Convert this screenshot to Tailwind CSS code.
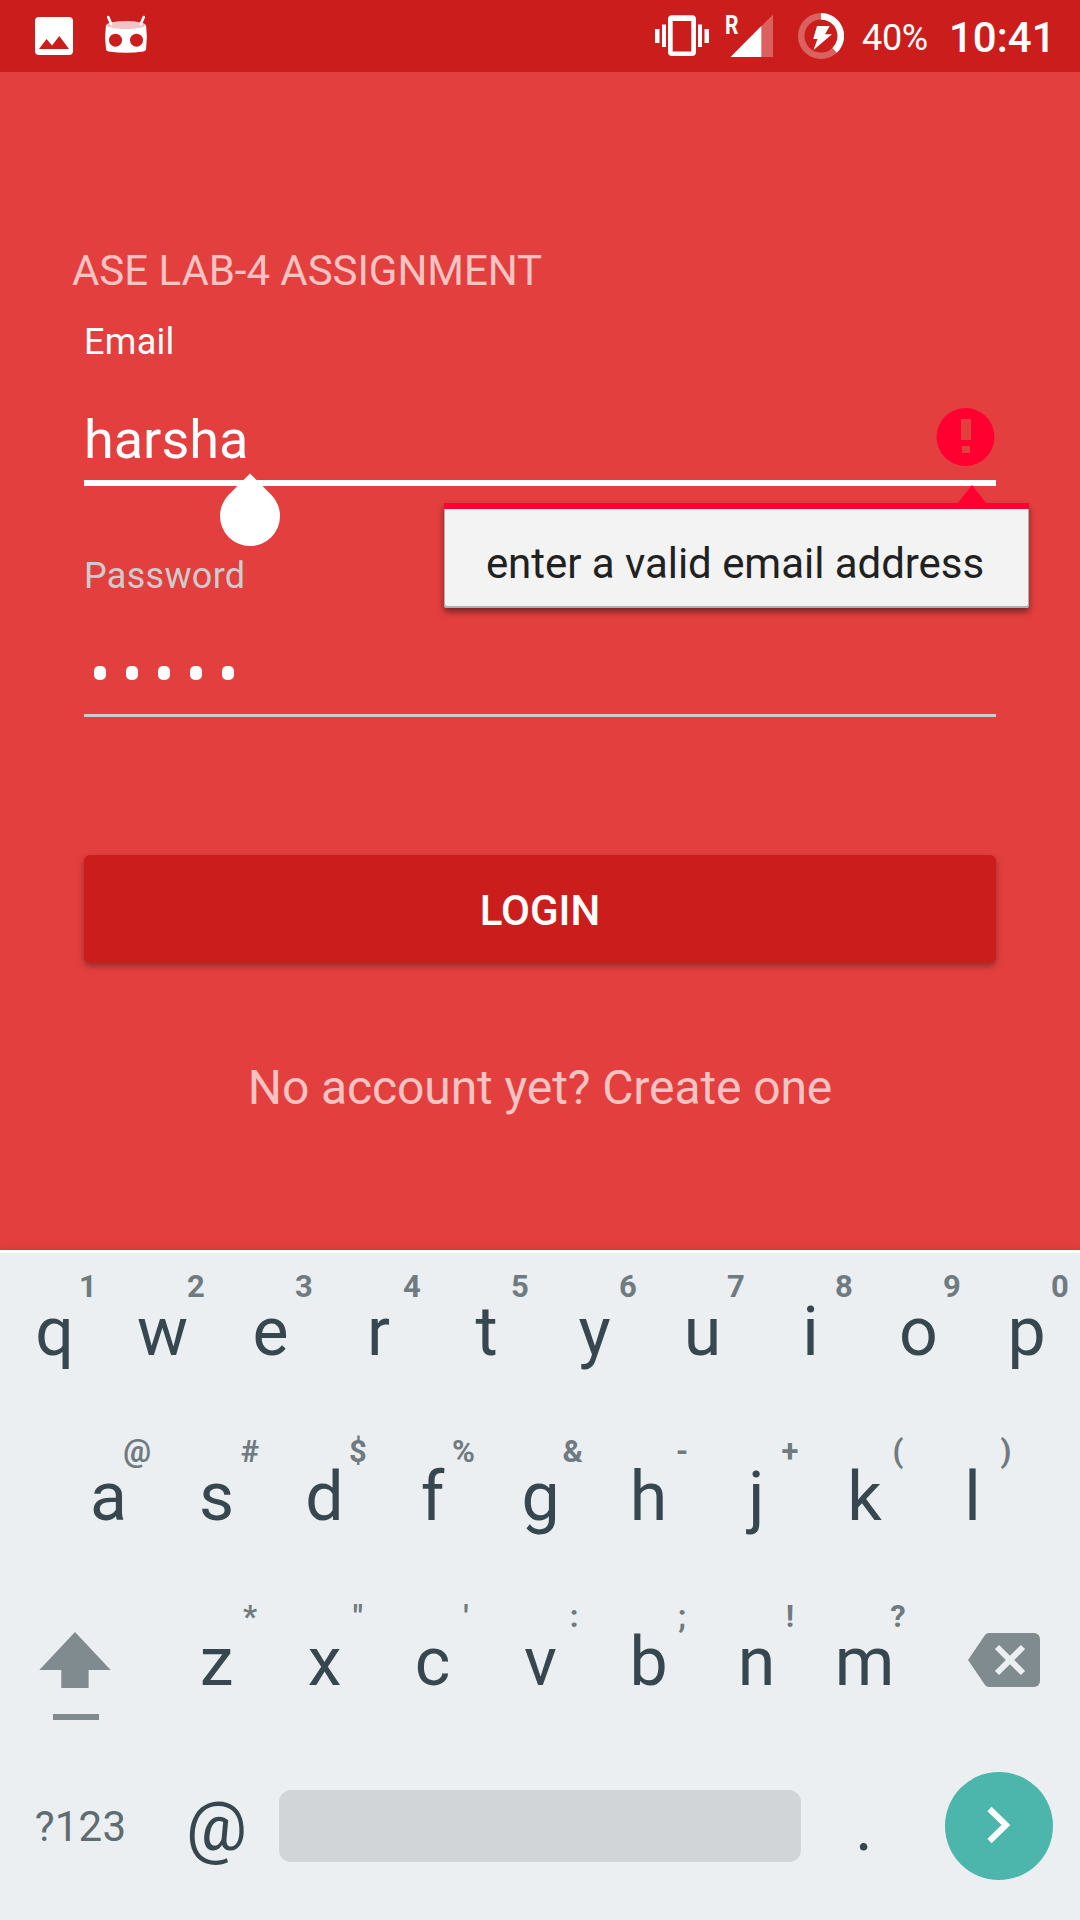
<!DOCTYPE html>
<html lang="en">
<head>
<meta charset="utf-8">
<title>Login</title>
<script src="https://cdn.jsdelivr.net/npm/@tailwindcss/browser@4"></script>
</head>
<body class="w-[1080px] h-[1920px] overflow-hidden flex flex-col bg-[#e43f3f] font-['Roboto',sans-serif] text-white">

<!-- Status bar -->
<header class="h-[72px] shrink-0 bg-[#cb1d1b] flex justify-between">
  <svg class="w-[160px] h-[72px]" viewBox="0 0 160 72">
    <path fill="#fff" fill-rule="evenodd" d="M39 17H69a4 4 0 0 1 4 4V51a4 4 0 0 1-4 4H39a4 4 0 0 1-4-4V21a4 4 0 0 1 4-4ZM39 49H69L59.300 36 52 45.400 46.500 39Z"/>
    <path fill="#fff" fill-rule="evenodd" d="M106 24.500C108 29.500 144 29.500 146 24.500Q147.800 37 146 49.500Q145.500 51 143.500 51.500Q126 54 108.500 51.500Q106.500 51 106 49.500Q104.200 37 106 24.500ZM115.500 33.700a6.500 6.500 0 1 0 0 13a6.500 6.500 0 1 0 0-13ZM136.500 33.700a6.500 6.500 0 1 0 0 13a6.500 6.500 0 1 0 0-13Z"/>
    <ellipse cx="126" cy="25" rx="19.500" ry="4" fill="#f4c3c5"/>
    <path stroke="#fff" stroke-width="2.600" stroke-linecap="round" d="M108.200 17l3 7M143.800 17l-3 7"/>
  </svg>
  <div class="flex">
    <svg class="w-[232px] h-[72px]" viewBox="630 0 232 72">
      <path fill="#fff" fill-rule="evenodd" d="M672 15.300H692a4 4 0 0 1 4 4V52a4 4 0 0 1-4 4H672a4 4 0 0 1-4-4V19.300a4 4 0 0 1 4-4ZM672.700 21V51.500H691.300V21Z"/>
      <path fill="#fff" d="M655 29h4.500v14H655zM662 24.500h4v22.500h-4zM698 24.500h4v22.500h-4zM704.500 29h4.500v14h-4.500z"/>
      <text x="725" y="33.500" font-size="26" font-weight="700" fill="#fff" textLength="13.500" lengthAdjust="spacingAndGlyphs">R</text>
      <path fill="#fff" fill-opacity=".3" d="M773 14.500V57H761V26.500Z"/>
      <path fill="#fff" d="M761.300 26V57H730.500Z"/>
      <circle cx="821" cy="36" r="19.800" fill="none" stroke="#fff" stroke-opacity=".3" stroke-width="6.500"/>
      <path d="M821 16.200A19.800 19.800 0 0 1 834.600 50.400" fill="none" stroke="#fff" stroke-width="6.500"/>
      <path fill="#fff" d="M817 26H829.700L825 34.300H832L813.500 50L817.500 39H813.200Z"/>
    </svg>
    <span class="w-[87px] pt-[17px] text-[36px] leading-[42px] tracking-[-0.3px]">40%</span>
    <span class="w-[131px] pt-[13px] text-[42px] leading-[50px] font-medium">10:41</span>
  </div>
</header>

<!-- Login form -->
<main class="relative h-[1178px] shrink-0 flex flex-col pt-[174px] px-[72px]">
  <h1 class="text-[42px] leading-[50px] tracking-[-0.05px] text-white/70">ASE LAB-4 ASSIGNMENT</h1>
  <div class="px-3 flex flex-col">
    <label class="mt-[25px] text-[36px] leading-[42px] tracking-[0.3px]">Email</label>
    <div class="relative mt-[45px] h-[78px] border-b-6 border-white flex justify-between">
      <span class="text-[54px] leading-[64px]">harsha</span>
      <svg class="w-[60px] h-[60px]" viewBox="936 408 60 60">
        <path fill="#ff0030" fill-rule="evenodd" d="M965.500 408a29 29 0 1 0 0 58a29 29 0 1 0 0-58ZM961 419H971V440H961ZM962 446H970V453H962Z"/>
      </svg>
      <!-- text cursor handle -->
      <div class="absolute left-[136px] top-[78px] size-[60px] rotate-45 rounded-full rounded-tl-none bg-white"></div>
    </div>
    <label class="mt-[69px] text-[36px] leading-[42px] tracking-[0.3px] text-[#ccc]">Password</label>
    <div class="mt-[45px] h-[75px] border-b-3 border-[#ccc] flex gap-5 pl-[10px] pt-6">
      <i class="w-3 h-[14px] rounded-[5px] bg-white"></i>
      <i class="w-3 h-[14px] rounded-[5px] bg-white"></i>
      <i class="w-3 h-[14px] rounded-[5px] bg-white"></i>
      <i class="w-3 h-[14px] rounded-[5px] bg-white"></i>
      <i class="w-3 h-[14px] rounded-[5px] bg-white"></i>
    </div>
    <button class="mt-[138px] h-[108px] pt-[3px] rounded-md bg-[#cb1d1b] text-[42px] leading-[50px] font-medium shadow-[0_3px_6px_rgba(60,30,30,0.5)]">LOGIN</button>
    <a class="mt-[97px] text-center text-[48px] leading-[56px] tracking-[-0.1px] text-white/70">No account yet? Create one</a>
  </div>

  <!-- Validation popup -->
  <div class="absolute left-[444px] top-[431px] w-[585px] h-[105px] bg-[#f3f3f3] border-t-6 border-[#ff0030] rounded-b-[3px] pt-[30px] pr-[3px] text-center text-[42px] leading-[50px] tracking-[-0.04px] text-[#212121] shadow-[inset_0_-1px_0_1px_#a9b0b2,0_4px_6px_rgba(50,20,20,0.6)]">enter a valid email address
    <svg class="absolute left-[513px] top-[-24px] w-[30px] h-[19px]" viewBox="0 0 30 19"><path fill="#ff0030" d="M15 0L30 19H0Z"/></svg>
  </div>
</main>

<!-- Keyboard -->
<section class="relative h-[670px] shrink-0 bg-[#eceff1] border-t-3 border-white text-[#37474f] shadow-[0_0_8px_rgba(0,0,0,0.15)]">
  <div class="flex h-[165px]" data-keys="q1 w2 e3 r4 t5 y6 u7 i8 o9 p0"></div>
  <div class="flex h-[165px] px-[54px]" data-keys="a@ s# d$ f% g&amp; h- j+ k( l)"></div>
  <div class="flex h-[165px]">
    <svg class="w-[162px] h-[165px]" viewBox="0 1583 162 165">
      <path fill="#808b8f" d="M75 1632L110.700 1670H88.600V1688H61.300V1670H39.300ZM53 1714H99V1720H53Z"/>
    </svg>
    <div class="flex" data-keys="z* x&quot; c' v: b; n! m?"></div>
    <svg class="w-[162px] h-[165px]" viewBox="918 1583 162 165">
      <path fill="#808b8f" d="M989 1633H1034a6 6 0 0 1 6 6V1681a6 6 0 0 1-6 6H989Q986.500 1687 985 1685L968 1660L985 1635Q986.500 1633 989 1633Z"/>
      <path stroke="#eceff1" stroke-width="6" d="M997 1647L1023 1673M1023 1647L997 1673"/>
    </svg>
  </div>
  <div class="flex h-[165px]">
    <span class="w-[162px] pt-[54px] pr-px text-center text-[42px] leading-[50px] tracking-[0.2px] text-[#5f6c72]">?123</span>
    <span class="w-[117px] pt-[39px] pr-2 text-center text-[68px] leading-[80px]">@</span>
    <div class="w-[522px] h-[72px] mt-[42px] rounded-xl bg-[#d1d5d8]"></div>
    <span class="w-[125px] pt-[39px] pl-px text-center text-[68px] leading-[80px]">.</span>
    <div class="ml-[19px] mt-6 size-[108px] rounded-full bg-[#4db6ac]">
      <svg class="size-[108px]" viewBox="945 1772 108 108"><path fill="none" stroke="#fff" stroke-width="6" d="M989.500 1809L1006 1825L989.500 1841"/></svg>
    </div>
  </div>
</section>

<script>
document.querySelectorAll('[data-keys]').forEach(row => {
  row.dataset.keys.split(' ').forEach(k => {
    const key = document.createElement('div');
    key.className = 'relative w-[108px] pt-[39px] pl-px text-center text-[68px] leading-[80px]';
    key.textContent = k[0];
    const hint = document.createElement('span');
    hint.className = 'absolute right-[11px] top-4 min-w-[18px] text-center text-[31px] leading-[36px] font-bold text-[#6f7b80]';
    hint.textContent = k[1];
    key.append(hint);
    row.append(key);
  });
});
</script>
</body>
</html>
